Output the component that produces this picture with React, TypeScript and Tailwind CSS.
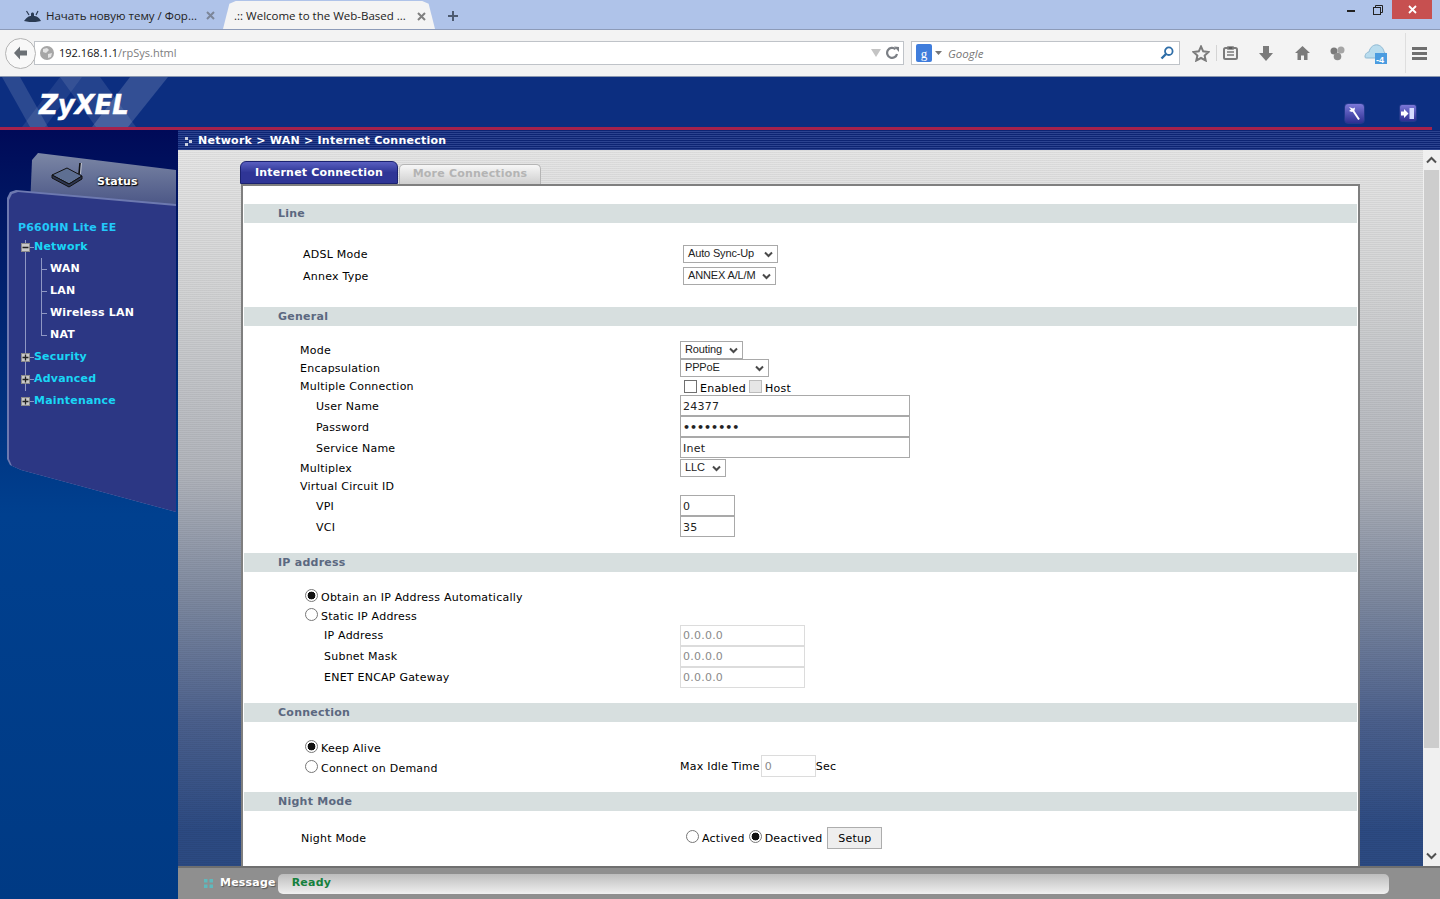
import React from "react";

const Chevron = () => (
  <svg width="9" height="7" viewBox="0 0 9 7" className="shrink-0">
    <path d="M1 1.5 L4.5 5 L8 1.5" fill="none" stroke="#4a4a4a" strokeWidth="2" />
  </svg>
);

function Dropdown({ text, cls }: { text: string; cls: string }) {
  return (
    <div className={`flex items-center justify-between border border-[#a9a9a9] bg-white pl-[4px] pr-[4px] text-[11px] leading-none tracking-[-0.15px] text-[#222] font-['Liberation_Sans',sans-serif] ${cls}`}>
      <span className="-translate-y-px">{text}</span>
      <Chevron />
    </div>
  );
}

function Row({ h, label, indent, children }: { h: string; label?: string; indent: string; children?: React.ReactNode }) {
  return (
    <div className={`flex items-center ${h}`}>
      <div className={`w-[436px] shrink-0 text-black ${indent}`}>{label}</div>
      {children}
    </div>
  );
}

function SectionBar({ title, cls }: { title: string; cls: string }) {
  return (
    <div className={`flex h-[19px] items-center bg-[#d7dfdf] pl-[34px] text-[11px] font-bold tracking-[0.25px] text-[#5b6880] ${cls}`}>{title}</div>
  );
}

const TextInput = ({ value, cls, type = "text" }: { value: string; cls: string; type?: string }) => (
  <input type={type} readOnly value={value} className={`border border-[#a9a9a9] bg-white px-[2px] pt-px text-[#222] outline-none font-['DejaVu_Sans',sans-serif] ${cls}`} />
);

const GrayInput = ({ value }: { value: string }) => (
  <input disabled value={value} className="h-[21px] w-[125px] border border-[#dcdcdc] bg-white px-[2px] text-[11px] text-[#8a8a8a] outline-none font-['DejaVu_Sans',sans-serif]" />
);

const Radio = ({ on }: { on?: boolean }) => (
  <input
    type="radio"
    readOnly
    checked={!!on}
    className="m-0 h-[13px] w-[13px] shrink-0 -translate-y-[2px] appearance-none rounded-full border border-[#777] bg-white checked:[background-image:radial-gradient(circle,#111_0,#111_3.6px,#fff_4.2px)]"
  />
);

function RadioRow({ h, on, label }: { h: string; on?: boolean; label: string }) {
  return (
    <div className={`flex items-center pl-[61px] ${h}`}>
      <Radio on={on} />
      <span className="ml-[3px] text-black">{label}</span>
    </div>
  );
}

const TreeBox = ({ plus }: { plus?: boolean }) => (
  <span className="relative z-10 flex h-[9px] w-[9px] shrink-0 items-center justify-center bg-[#c9c9c9] border border-[#8b8b8b]">
    <svg width="7" height="7" viewBox="0 0 7 7">
      <path d={plus ? "M0.5 3.5H6.5M3.5 0.5V6.5" : "M0.5 3.5H6.5"} stroke="#222" strokeWidth="1.3" />
    </svg>
  </span>
);

function TreeTop({ label, plus }: { label: string; plus?: boolean }) {
  return (
    <div className="flex h-[22px] items-center pl-[12px]">
      <TreeBox plus={plus} />
      <span className="h-px w-[4px] bg-[#8f97c4]" />
      <span className="text-[11px] font-bold tracking-[0.2px] text-[#19d6f5]">{label}</span>
    </div>
  );
}

function TreeSub({ label }: { label: string }) {
  return (
    <div className="flex h-[22px] items-center pl-[32px]">
      <span className="mr-[3px] h-px w-[6px] bg-[#8f97c4]" />
      <span className="text-[11px] font-bold tracking-[0.2px] text-white">{label}</span>
    </div>
  );
}

const GRAY = "#7b7b7b";

function BrowserTabs() {
  return (
    <div className="flex h-[30px] shrink-0 items-end border-b border-[#8d9bb8] bg-[#afc3e9] font-['Open_Sans',sans-serif] text-[11.5px] text-[#222]">
      <div className="flex h-[29px] w-[223px] shrink-0 items-center pl-[24px] pt-[2px]">
        <svg width="17" height="13" viewBox="0 0 17 13" className="mr-[5px] shrink-0">
          <path d="M0 12 C3 8 5 7 7 7 L7 5 C7 3 10 3 10 5 L10 7 C12 7 15 8 17 12 C12 13.5 5 13.5 0 12Z" fill="#2a3a52" />
          <path d="M5 6 L2.5 2 M12 6 L14 2" stroke="#2a3a52" strokeWidth="1.2" />
        </svg>
        <span className="whitespace-nowrap">Начать новую тему / Фор...</span>
        <svg width="9" height="9" viewBox="0 0 9 9" className="ml-[9px]">
          <path d="M1 1L8 8M8 1L1 8" stroke="#7c8699" strokeWidth="2" />
        </svg>
      </div>
      <div className="flex h-[28px] w-[212px] shrink-0 items-center rounded-t-[11px] bg-[#f4f4f4] pl-[11px] pt-[2px] [clip-path:polygon(0_100%,3%_10%,6%_0,94%_0,97%_10%,100%_100%)]">
        <span className="whitespace-nowrap">.:: Welcome to the Web-Based ...</span>
        <svg width="9" height="9" viewBox="0 0 9 9" className="ml-[11px]">
          <path d="M1 1L8 8M8 1L1 8" stroke="#7f7f7f" strokeWidth="2" />
        </svg>
      </div>
      <div className="flex h-[29px] items-center pl-[13px] pt-[2px]">
        <svg width="10" height="10" viewBox="0 0 10 10">
          <path d="M0 5H10M5 0V10" stroke="#4d5a70" strokeWidth="2" />
        </svg>
      </div>
      <div className="flex-1" />
      <div className="flex h-[29px] items-start">
        <svg width="9" height="3" viewBox="0 0 9 3" className="mr-[17px] mt-[10px]">
          <rect width="8" height="2" fill="#222" />
        </svg>
        <svg width="10" height="10" viewBox="0 0 10 10" className="mr-[9px] mt-[5px]">
          <path d="M2.5 2.5V0.5H9.5V7.5H7.5" fill="none" stroke="#222" />
          <rect x="0.5" y="2.5" width="7" height="7" fill="none" stroke="#222" />
        </svg>
        <div className="mr-[8px] flex h-[19px] w-[40px] items-center justify-center bg-[#c75050]">
          <svg width="9" height="9" viewBox="0 0 9 9">
            <path d="M1 1L8 8M8 1L1 8" stroke="#fff" strokeWidth="1.8" />
          </svg>
        </div>
      </div>
    </div>
  );
}

function BrowserToolbar() {
  return (
    <div className="flex h-[47px] shrink-0 items-center border-b border-[#8a97b0] bg-[#f3f3f3] pl-[5px] font-['Open_Sans',sans-serif]">
      <div className="z-10 flex h-[31px] w-[31px] shrink-0 items-center justify-center rounded-full border border-[#b4b4b4] bg-[#f8f8f8]">
        <svg width="15" height="14" viewBox="0 0 15 14">
          <path d="M7 0.5L1 7L7 13.5V9.5H14V4.5H7Z" fill="#6b7075" />
        </svg>
      </div>
      <div className="-ml-[2px] flex h-[24px] w-[870px] shrink-0 items-center border border-[#bfc3c8] bg-white pl-[5px] pr-[3px] text-[11px]">
        <svg width="14" height="14" viewBox="0 0 14 14" className="mr-[5px] shrink-0">
          <circle cx="7" cy="7" r="7" fill="#a6a6a6" />
          <path d="M3 3L7 2L9 4L6 7L3 6ZM8 8L12 7L11 11L8 12Z" fill="#e4e4e4" />
        </svg>
        <span className="pt-px text-[#111]">192.168.1.1</span>
        <span className="pt-px text-[#7d7d7d]">/rpSys.html</span>
        <div className="flex-1" />
        <svg width="10" height="8" viewBox="0 0 10 8" className="mr-[5px]">
          <path d="M0 0H10L5 8Z" fill="#c4c4c4" />
        </svg>
        <svg width="14" height="14" viewBox="0 0 14 14">
          <path d="M11 8A5 5 0 1 1 9.5 3.2" fill="none" stroke="#7b7f85" strokeWidth="2.2" />
          <path d="M8 0.5L13 1V6Z" fill="#7b7f85" />
        </svg>
      </div>
      <div className="ml-[7px] flex h-[24px] w-[269px] shrink-0 items-center border border-[#bfc3c8] bg-white pl-[4px] pr-[5px]">
        <div className="flex h-[18px] w-[16px] items-center justify-center rounded-[2px] bg-[#3f7ddc] text-[13px] leading-none text-white font-['Liberation_Serif',serif]">g</div>
        <svg width="7" height="4" viewBox="0 0 7 4" className="ml-[3px]">
          <path d="M0 0H7L3.5 4Z" fill="#777" />
        </svg>
        <span className="ml-[6px] pt-px text-[11.5px] italic text-[#777]">Google</span>
        <div className="flex-1" />
        <svg width="14" height="14" viewBox="0 0 14 14">
          <circle cx="8.8" cy="5.2" r="3.8" fill="none" stroke="#2f6ea8" strokeWidth="1.8" />
          <path d="M6 8L1.5 12.5" stroke="#2f6ea8" strokeWidth="2.4" />
        </svg>
      </div>
      <svg width="18" height="17" viewBox="0 0 18 17" className="ml-[12px]">
        <path d="M9 1.5L11.2 6.3L16.5 7L12.6 10.5L13.7 15.5L9 13L4.3 15.5L5.4 10.5L1.5 7L6.8 6.3Z" fill="none" stroke={GRAY} strokeWidth="2" />
      </svg>
      <span className="ml-[6px] h-[16px] w-px bg-[#d4d4d4]" />
      <svg width="15" height="14" viewBox="0 0 15 14" className="ml-[6px]">
        <rect x="1" y="2" width="13" height="11" rx="1.5" fill="none" stroke={GRAY} strokeWidth="2" />
        <path d="M5 1H10V3H5ZM4 6H11M4 9H11" stroke={GRAY} strokeWidth="1.6" />
      </svg>
      <svg width="14" height="15" viewBox="0 0 14 15" className="ml-[21px]">
        <path d="M4 0H10V7H14L7 15L0 7H4Z" fill={GRAY} />
      </svg>
      <svg width="15" height="14" viewBox="0 0 15 14" className="ml-[22px]">
        <path d="M7.5 0L15 7H12.5V14H9V9.5H6V14H2.5V7H0Z" fill={GRAY} />
      </svg>
      <svg width="15" height="15" viewBox="0 0 15 15" className="ml-[20px]">
        <circle cx="4" cy="5" r="3.5" fill="#7a7a7a" />
        <circle cx="11" cy="4" r="3.5" fill="#a5a5a5" />
        <circle cx="7.5" cy="10.5" r="3.8" fill="#8c8c8c" />
      </svg>
      <svg width="24" height="22" viewBox="0 0 24 22" className="ml-[19px]">
        <path d="M1 15C1 11 4 10 5 10C6 5 10 2 14 3C18 4 20 8 20 10C22 11 23 13 22 16H3C2 16 1 16 1 15Z" fill="#b9dcee" stroke="#8fb9d3" />
        <rect x="11" y="11" width="12" height="11" fill="#4b9ce0" />
        <text x="12" y="20.5" fontSize="9" fontWeight="700" fill="#fff" fontFamily="Liberation Sans, sans-serif">-4</text>
      </svg>
      <span className="ml-[17px] h-[40px] w-px bg-[#dedede]" />
      <svg width="15" height="13" viewBox="0 0 15 13" className="ml-[6px]">
        <path d="M0 1.5H15M0 6.5H15M0 11.5H15" stroke="#6e6e6e" strokeWidth="3" />
      </svg>
    </div>
  );
}

function PageHeader() {
  return (
    <div className="relative h-[50px] shrink-0 overflow-hidden bg-[#0c2e80]">
      <svg width="175" height="50" viewBox="0 0 175 50" className="absolute left-0 top-0">
        <path d="M2 0H20L48 50H30Z" fill="#fff" fillOpacity="0.13" />
        <path d="M60 0H100L136 50H96Z" fill="#fff" fillOpacity="0.1" />
        <path d="M130 0H168L128 50H92Z" fill="#fff" fillOpacity="0.16" />
        <path d="M60 0H82L45 50H22Z" fill="#fff" fillOpacity="0.08" />
      </svg>
      <div className="relative flex h-full items-center pl-[39px] pt-[6px]">
        <span className="text-[26px] font-bold italic leading-none tracking-[-0.1px] text-white [-webkit-text-stroke:0.4px_white] font-['DejaVu_Sans',sans-serif]">ZyXEL</span>
        <div className="flex-1" />
        <div className="mt-[16px] mr-[34px] flex h-[21px] w-[21px] items-center justify-center rounded-[4px] border border-[#223a8c] bg-gradient-to-b from-[#7c78d8] to-[#2f2f92]">
          <svg width="13" height="15" viewBox="0 0 13 15">
            <path d="M1 1L5 2.5L7 1.5L6.5 4.5L4 6L1 5L3 3.5Z" fill="#fff" />
            <path d="M5 4.5L11 13.5" stroke="#fff" strokeWidth="2" />
          </svg>
        </div>
        <div className="mt-[16px] mr-[23px] flex h-[18px] w-[18px] items-center justify-center rounded-[3px] border border-[#223a8c] bg-gradient-to-b from-[#7c78d8] to-[#2f2f92]">
          <svg width="14" height="13" viewBox="0 0 14 13">
            <path d="M0 4.5H3V2L7.5 6.5L3 11V8.5H0Z" fill="#fff" />
            <path d="M8.5 1H13V12H8.5" fill="#d5dcff" />
          </svg>
        </div>
      </div>
    </div>
  );
}

function Sidebar() {
  return (
    <div className="h-full w-[178px] shrink-0 overflow-hidden bg-gradient-to-b from-[#000a58] via-[#00408f] to-[#003a84] font-['DejaVu_Sans',sans-serif]">
      <div className="ml-[30px] mt-[22px] flex h-[55px] w-[146px] items-start bg-gradient-to-b from-[#7d88a6] to-[#4a5585] pl-[21px] pt-[10px] [clip-path:polygon(0_100%,2px_8px,8px_1px,146px_18px,146px_100%)]">
        <svg width="34" height="26" viewBox="0 0 34 26" className="shrink-0">
          <path d="M1 13L16 6L31 14L18 22Z" fill="#5e6f92" stroke="#111" />
          <path d="M1 13V16L18 25L31 17V14L18 22Z" fill="#2d3550" stroke="#111" />
          <path d="M28 12L29 1" stroke="#111" strokeWidth="1.6" />
          <path d="M29.5 12L30.5 1" stroke="#ddd" strokeWidth="0.7" />
        </svg>
        <span className="ml-[12px] mt-[12px] text-[11px] font-bold tracking-[0.05px] text-white [text-shadow:0_0_2px_#000,1px_1px_1px_#000]">Status</span>
      </div>
      <div className="-mt-[18px] ml-[7px] h-[323px] w-[169px] bg-[#6d79b0] [clip-path:polygon(0_9px,3px_3px,9px_1px,169px_15px,169px_100%,14px_281px,3px_276px,0_270px)]">
        <div className="ml-[2px] h-full bg-[#2c3784] pt-[32px] [clip-path:polygon(0_11px,3px_5px,9px_3px,167px_17px,167px_100%,12px_281px,3px_277px,0_270px)]">
          <div className="pl-[9px] text-[11px] font-bold leading-[14px] tracking-[0.2px] text-[#22c8fa]">P660HN Lite EE</div>
          <div className="relative mt-[1px]">
            <span className="absolute left-[16px] top-[4px] h-[151px] w-px bg-[#8f97c4]" />
            <span className="absolute left-[32px] top-[22px] h-[77px] w-px bg-[#8f97c4]" />
            <TreeTop label="Network" />
            <TreeSub label="WAN" />
            <TreeSub label="LAN" />
            <TreeSub label="Wireless LAN" />
            <TreeSub label="NAT" />
            <TreeTop label="Security" plus />
            <TreeTop label="Advanced" plus />
            <TreeTop label="Maintenance" plus />
          </div>
        </div>
      </div>
    </div>
  );
}

function FormPanel() {
  return (
    <div className="flex-1 border-x-2 border-t-2 border-[#7f7f7f] bg-white px-px pt-[18px] text-[11px] leading-none tracking-[0.23px]">
      <SectionBar title="Line" cls="" />
      <div className="pl-[3px] pt-[20px]">
        <Row h="h-[22px]" label="ADSL Mode" indent="pl-[56px]"><Dropdown text="Auto Sync-Up" cls="h-[18px] w-[95px]" /></Row>
        <Row h="h-[22px]" label="Annex Type" indent="pl-[56px]"><Dropdown text="ANNEX A/L/M" cls="h-[18px] w-[93px]" /></Row>
      </div>
      <SectionBar title="General" cls="mt-[20px]" />
      <div className="pt-[15px]">
        <Row h="h-[18px]" label="Mode" indent="pl-[56px]"><Dropdown text="Routing" cls="h-[18px] w-[63px]" /></Row>
        <Row h="h-[18px]" label="Encapsulation" indent="pl-[56px]"><Dropdown text="PPPoE" cls="h-[18px] w-[89px]" /></Row>
        <Row h="h-[18px]" label="Multiple Connection" indent="pl-[56px]">
          <div className="flex items-center pl-[4px]">
            <input type="checkbox" readOnly checked={false} className="m-0 h-[13px] w-[13px] appearance-none border border-[#707070] bg-white" />
            <span className="ml-[3px] translate-y-[2px] text-black">Enabled</span>
            <input type="checkbox" disabled className="m-0 ml-[3px] h-[13px] w-[13px] appearance-none border border-[#bcbcbc] bg-[#e6e6e6]" />
            <span className="ml-[3px] translate-y-[2px] text-black">Host</span>
          </div>
        </Row>
        <Row h="h-[21px]" label="User Name" indent="pl-[72px] pt-px"><TextInput value="24377" cls="h-[21px] w-[230px] text-[11px]" /></Row>
        <Row h="h-[21px]" label="Password" indent="pl-[72px] pt-px"><TextInput type="password" value="12345678" cls="h-[21px] w-[230px] text-[11px] font-bold tracking-normal" /></Row>
        <Row h="h-[21px]" label="Service Name" indent="pl-[72px] pt-px"><TextInput value="Inet" cls="h-[21px] w-[230px] text-[11px]" /></Row>
        <div className="h-px" />
        <Row h="h-[18px]" label="Multiplex" indent="pl-[56px]"><Dropdown text="LLC" cls="h-[18px] w-[46px]" /></Row>
        <Row h="h-[18px]" label="Virtual Circuit ID" indent="pl-[56px]" />
        <Row h="h-[21px]" label="VPI" indent="pl-[72px] pt-px"><TextInput value="0" cls="h-[21px] w-[55px] text-[11px]" /></Row>
        <Row h="h-[21px]" label="VCI" indent="pl-[72px] pt-px"><TextInput value="35" cls="h-[21px] w-[55px] text-[11px]" /></Row>
      </div>
      <SectionBar title="IP address" cls="mt-[16px]" />
      <div className="pt-[16px]">
        <RadioRow h="h-[19px]" on label="Obtain an IP Address Automatically" />
        <RadioRow h="h-[19px]" label="Static IP Address" />
        <div className="-mt-px" />
        <Row h="h-[21px]" label="IP Address" indent="pl-[80px]"><GrayInput value="0.0.0.0" /></Row>
        <Row h="h-[21px]" label="Subnet Mask" indent="pl-[80px]"><GrayInput value="0.0.0.0" /></Row>
        <Row h="h-[21px]" label="ENET ENCAP Gateway" indent="pl-[80px]"><GrayInput value="0.0.0.0" /></Row>
      </div>
      <SectionBar title="Connection" cls="mt-[15px]" />
      <div className="pt-[16px]">
        <RadioRow h="h-[20px]" on label="Keep Alive" />
        <div className="flex h-[20px] items-center">
          <div className="w-[436px] shrink-0">
            <RadioRow h="h-[20px]" label="Connect on Demand" />
          </div>
          <div className="flex -translate-y-[2px] items-center">
            <span className="text-black">Max Idle Time</span>
            <input disabled value="0" className="ml-px h-[22px] w-[55px] border border-[#dcdcdc] bg-white px-[3px] text-[11px] text-[#8a8a8a] outline-none font-['DejaVu_Sans',sans-serif]" />
            <span className="text-black">Sec</span>
          </div>
        </div>
      </div>
      <SectionBar title="Night Mode" cls="mt-[14px]" />
      <div className="pt-[17px]">
        <Row h="h-[20px]" label="Night Mode" indent="pl-[57px]">
          <div className="flex items-center pl-[6px]">
            <Radio />
            <span className="ml-[3px] text-black">Actived</span>
            <span className="ml-[4px] flex items-center"><Radio on /></span>
            <span className="ml-[3px] text-black">Deactived</span>
            <button className="ml-[5px] h-[22px] w-[55px] border border-[#adadad] bg-[#eeeeee] text-[11px] text-black">Setup</button>
          </div>
        </Row>
      </div>
    </div>
  );
}

function Scrollbar() {
  return (
    <div className="flex w-[17px] shrink-0 flex-col bg-[#f0f0f0]">
      <div className="flex h-[20px] items-center justify-center">
        <svg width="11" height="8" viewBox="0 0 11 8">
          <path d="M1 6.5L5.5 2L10 6.5" fill="none" stroke="#505050" strokeWidth="2" />
        </svg>
      </div>
      <div className="mx-px h-[578px] bg-[#cdcdcd]" />
      <div className="flex-1" />
      <div className="flex h-[20px] items-center justify-center">
        <svg width="11" height="8" viewBox="0 0 11 8">
          <path d="M1 1.5L5.5 6L10 1.5" fill="none" stroke="#505050" strokeWidth="2" />
        </svg>
      </div>
    </div>
  );
}

export default function App() {
  return (
    <div className="flex h-[899px] w-[1440px] flex-col overflow-hidden bg-white font-['DejaVu_Sans',sans-serif]">
      <BrowserTabs />
      <BrowserToolbar />
      <PageHeader />
      <div className="h-[3px] shrink-0 bg-[#0c2e80]">
        <div className="h-full w-[1432px] bg-[#a5224c]" />
      </div>
      <div className="flex min-h-0 flex-1">
        <Sidebar />
        <div className="flex min-w-0 flex-1 flex-col">
          <div className="flex h-[20px] shrink-0 items-center pl-[7px] pt-[2px] text-[11px] font-bold tracking-[0.25px] text-white [background-image:repeating-linear-gradient(180deg,#0d2473_0,#0d2473_1px,#2c4390_1px,#2c4390_2px)]">
            <svg width="8" height="10" viewBox="0 0 8 10" className="mr-[5px] mt-[1px]">
              <path d="M0 0H3V3H0ZM4 3H7V6H4ZM0 6H3V9H0Z" fill="#c8cede" />
            </svg>
            <span>Network &gt; WAN &gt; Internet Connection</span>
          </div>
          <div className="flex min-h-0 flex-1">
            <div className="flex min-w-0 flex-1 flex-col overflow-hidden pl-[63px] pr-[63px] pt-[11px] [background-image:repeating-linear-gradient(180deg,rgba(0,0,0,0.05)_0,rgba(0,0,0,0.05)_1px,transparent_1px,transparent_2px),linear-gradient(180deg,#e6e6e6_0%,#d2d3d4_20%,#b1b4bb_45%,#7f8aa0_62%,#4a5f8c_80%,#2c4a82_95%,#2c4a82_100%)]">
              <div className="-ml-px flex h-[23px] shrink-0 items-end">
                <div className="flex h-[23px] w-[158px] items-center justify-center rounded-t-[6px] border border-[#1b2270] bg-gradient-to-b from-[#5a5fc0] via-[#2f3596] to-[#2f3596] pt-px text-[11px] font-bold tracking-[0.2px] text-white">Internet Connection</div>
                <div className="ml-px flex h-[20px] w-[142px] items-center justify-center rounded-t-[5px] border border-b-0 border-[#b5b5b5] bg-gradient-to-b from-[#f7f7f7] to-[#cfcfcf] text-[11px] font-bold tracking-[0.2px] text-[#b4b4b4]">More Connections</div>
              </div>
              <FormPanel />
            </div>
            <Scrollbar />
          </div>
          <div className="flex h-[33px] shrink-0 items-center border-t-2 border-[#6f6f6f] bg-[#8f8f8f] pl-[26px]">
            <svg width="9" height="9" viewBox="0 0 9 9" className="mr-[7px]">
              <path d="M0 0H3.5V3.5H0ZM5.5 0H9V3.5H5.5ZM0 5.5H3.5V9H0ZM5.5 5.5H9V9H5.5Z" fill="#5fb9bd" />
            </svg>
            <span className="text-[11px] font-bold tracking-[0.2px] text-white [text-shadow:1px_1px_1px_#555]">Message</span>
            <div className="ml-[2px] flex h-[20px] w-[1111px] items-center rounded-[5px] bg-gradient-to-b from-[#bdbdbd] to-[#f0f0f0] pl-[14px] text-[11px] font-bold tracking-[0.2px] text-[#15803d]">Ready</div>
          </div>
        </div>
      </div>
    </div>
  );
}
